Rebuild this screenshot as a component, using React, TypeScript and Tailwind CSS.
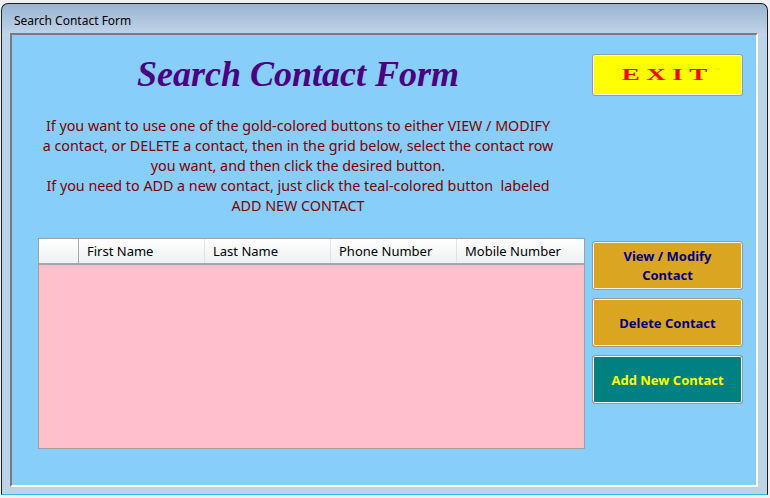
const sideBtn =
  "flex h-[49px] w-[151px] flex-col items-center justify-center rounded-[3px] border border-[#9a9a9a] pt-[1px] text-[13px] font-bold leading-[19px] shadow-[inset_0_0_0_1px_#f4f4f4] [font-family:'Noto_Sans',sans-serif]";

const columns = ["First Name", "Last Name", "Phone Number", "Mobile Number"];

export default function App() {
  return (
    <div className="h-[498px] w-[770px] overflow-hidden bg-[#f0f0f0] pt-[3px] pl-[1px]">
      <div className="h-[492px] w-[767px] rounded-t-[7px] border border-[#1e1e1e] border-b-[#38b8d8] bg-[#bcd3ea] [background-image:linear-gradient(#99b4d1_0px,#c3d6ea_32px,#bcd3ea_33px)]">
        {/* title bar */}
        <div className="h-[29px] pt-[9px] pl-[12px] text-[12px] leading-[16px] text-black [font-family:'Noto_Sans',sans-serif]">
          Search Contact Form
        </div>

        {/* client area */}
        <div className="ml-[8px] h-[454px] w-[748px] border-2 border-[#7a7a7a] border-r-white border-b-white bg-[#87cefa] pt-[19px]">
          <div className="flex">
            <div className="ml-[26px] flex w-[520px] items-center justify-center pb-[2px]">
              <h1 className="text-[36px] leading-none font-bold text-[#4b0082] italic [font-family:'Liberation_Serif',serif]">
                Search Contact Form
              </h1>
            </div>
            <button className="ml-[34px] flex h-[42px] w-[151px] items-center justify-center rounded-[3px] border border-[#9a9a9a] bg-[#ffff00] shadow-[inset_0_0_0_1px_#f4f4f4]">
              <span className="origin-center scale-x-[1.6] text-[17px] font-bold tracking-[4px] text-[#ff0000] [font-family:'Liberation_Serif',serif]">
                EXIT
              </span>
            </button>
          </div>

          <p className="mt-[20px] ml-[26px] w-[520px] text-center text-[14.3px] leading-[20px] whitespace-nowrap text-[#800000] [font-family:'Noto_Sans',sans-serif]">
            If you want to use one of the gold-colored buttons to either VIEW / MODIFY
            <br />
            a contact, or DELETE a contact, then in the grid below, select the contact row
            <br />
            you want, and then click the desired button.
            <br />
            If you need to ADD a new contact, just click the teal-colored button&nbsp; labeled
            <br />
            ADD NEW CONTACT
          </p>

          <div className="mt-[22px] flex items-start">
            <div className="ml-[26px] flex h-[211px] w-[547px] flex-col border border-[#a0a0a0] bg-[#ffc0cb]">
              <div className="flex h-[26px] border-b-2 border-[#a8a8a8] bg-gradient-to-b from-white to-[#eef0f3] text-[13px] text-black [font-family:'Noto_Sans',sans-serif]">
                <div className="w-[40px] border-r border-[#a8a8a8]" />
                {columns.map((c) => (
                  <div
                    key={c}
                    className="flex w-[126px] items-center border-r border-[#e0e2e6] pt-[2px] pl-[8px] last:w-[125px] last:border-r-0"
                  >
                    {c}
                  </div>
                ))}
              </div>
            </div>

            <div className="ml-[7px] mt-[3px] flex flex-col gap-[8px]">
              <button className={`${sideBtn} bg-[#daa520] text-[#000080]`}>
                <span>View / Modify</span>
                <span>Contact</span>
              </button>
              <button className={`${sideBtn} bg-[#daa520] text-[#000080]`}>Delete Contact</button>
              <button className={`${sideBtn} bg-[#008080] text-[#ffff00]`}>Add New Contact</button>
            </div>
          </div>
        </div>
      </div>
    </div>
  );
}
